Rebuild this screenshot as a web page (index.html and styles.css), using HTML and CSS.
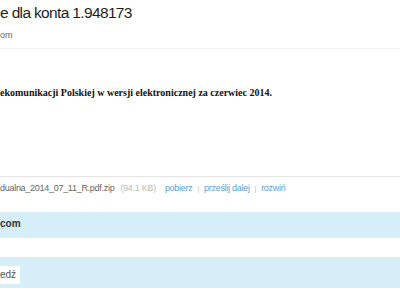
FILE: index.html
```html
<!DOCTYPE html>
<html lang="pl">
<head>
<meta charset="utf-8">
<link rel="stylesheet" href="styles.css">
</head>
<body>
<div class="page">
  <header class="head">
    <h1 class="title">e dla konta 1.948173</h1>
    <div class="from">om</div>
  </header>
  <div class="body">
    <p class="msg">ekomunikacji Polskiej w wersji elektronicznej za czerwiec 2014.</p>
  </div>
  <div class="attach">
    <span class="fname">dualna_2014_07_11_R.pdf.zip</span>
    <span class="size">(94.1 KB)</span>
    <a class="act">pobierz</a><span class="sep">|</span><a class="act">prześlij dalej</a><span class="sep">|</span><a class="act">rozwiń</a>
  </div>
  <div class="band band1"><span class="who">com</span></div>
  <div class="gap"></div>
  <div class="band band2"><span class="box">edź</span></div>
</div>
</body>
</html>
```
FILE: styles.css
```css
html, body {
  margin: 0;
  padding: 0;
  background: #fff;
  overflow: hidden;
}
.page {
  width: 400px;
  height: 300px;
  font-family: "Liberation Sans", Arial, sans-serif;
}
.head {
  padding-top: 4px;
  padding-bottom: 7px;
  border-bottom: 1px solid #f2f2f2;
}
.title {
  margin: 0;
  font-weight: normal;
  font-size: 15.5px;
  letter-spacing: -0.65px;
  line-height: 18px;
  color: #1e1e1e;
}
.from {
  margin-top: 7px;
  font-size: 9px;
  line-height: 12px;
  color: #666;
}
.body {
  padding-top: 38px;
  height: 89px;
  border-bottom: 1px solid #e4e4e4;
}
.msg {
  margin: 0;
  font-family: "Liberation Serif", "Times New Roman", serif;
  font-weight: bold;
  font-size: 10px;
  line-height: 12px;
  color: #111;
}
.attach {
  padding-top: 5px;
  height: 30px;
  font-size: 9px;
  letter-spacing: -0.28px;
  line-height: 12px;
  color: #666;
  display: flex;
  align-items: baseline;
  white-space: nowrap;
}
.size {
  color: #bbb;
  margin-left: 6px;
  margin-right: 9px;
}
.act {
  color: #5a9fdc;
}
.sep {
  color: #bbb;
  font-size: 7px;
  margin: 0 5px;
}
.band {
  background: #d6eef8;
}
.band1 {
  height: 26px;
  padding-top: 6px;
  box-sizing: border-box;
}
.who {
  display: block;
  font-size: 10px;
  line-height: 12px;
  font-weight: bold;
  color: #333;
}
.gap {
  height: 19px;
}
.band2 {
  height: 31px;
  padding-top: 7px;
  box-sizing: border-box;
}
.box {
  display: inline-block;
  background: #fff;
  height: 18px;
  line-height: 18px;
  padding-right: 4px;
  font-size: 10px;
  color: #555;
}
```
